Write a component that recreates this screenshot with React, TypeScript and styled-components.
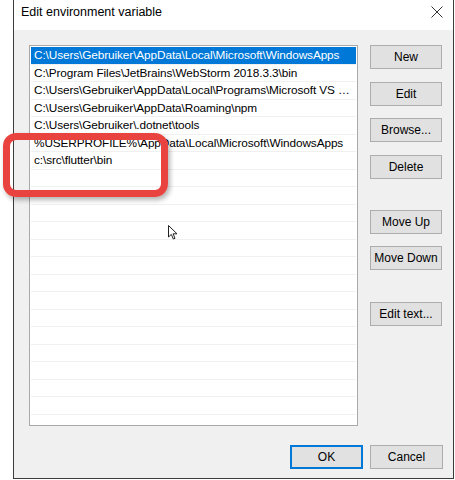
import React from "react"
import styled, { createGlobalStyle } from "styled-components"

const GlobalStyle = createGlobalStyle`
    body {
        margin: 0;
        background: #ffffff;
        font-family: "Liberation Sans", Arial, sans-serif;
    }
`

const paths = [
    "C:\\Users\\Gebruiker\\AppData\\Local\\Microsoft\\WindowsApps",
    "C:\\Program Files\\JetBrains\\WebStorm 2018.3.3\\bin",
    "C:\\Users\\Gebruiker\\AppData\\Local\\Programs\\Microsoft VS Cod...",
    "C:\\Users\\Gebruiker\\AppData\\Roaming\\npm",
    "C:\\Users\\Gebruiker\\.dotnet\\tools",
    "%USERPROFILE%\\AppData\\Local\\Microsoft\\WindowsApps",
    "c:\\src\\flutter\\bin",
]
const TOTAL_ROWS = 22

const sideButtons = [
    { label: "New", gapBefore: 0 },
    { label: "Edit", gapBefore: 0 },
    { label: "Browse...", gapBefore: 0 },
    { label: "Delete", gapBefore: 0 },
    { label: "Move Up", gapBefore: 18 },
    { label: "Move Down", gapBefore: 0 },
    { label: "Edit text...", gapBefore: 19 },
]

export default function App() {
    const rows = Array.from({ length: TOTAL_ROWS }, (_, i) => paths[i] ?? "")
    return (
        <>
            <GlobalStyle />
            <Page>
                <Window>
                    <TitleBar>
                        <Title>Edit environment variable</Title>
                        <CloseIcon />
                    </TitleBar>
                    <Body>
                        <Main>
                            <ListBox>
                                {rows.map((text, i) => (
                                    <Row key={i} $selected={i === 0}>{text}</Row>
                                ))}
                            </ListBox>
                            <ButtonColumn>
                                {sideButtons.map(b => (
                                    <SideButton key={b.label} $gapBefore={b.gapBefore}>{b.label}</SideButton>
                                ))}
                            </ButtonColumn>
                        </Main>
                        <Footer>
                            <DialogButton $primary>OK</DialogButton>
                            <DialogButton>Cancel</DialogButton>
                        </Footer>
                    </Body>
                </Window>
                <Highlight />
                <Cursor />
            </Page>
        </>
    )
}

const CloseIcon = () => (
    <svg width="12" height="12" viewBox="0 0 12 12">
        <path d="M0.5 0.5 L11.5 11.5 M11.5 0.5 L0.5 11.5" stroke="#333" strokeWidth="1" fill="none" />
    </svg>
)

const Cursor = () => (
    <CursorWrap width="11" height="15" viewBox="0 0 11 15">
        <path d="M0.5 0.5 L0.5 12 L3.3 9.4 L5.3 14 L7 13.3 L5.1 8.8 L9 8.8 Z" fill="#fff" stroke="#222" strokeWidth="1" strokeLinejoin="round" />
    </CursorWrap>
)

const Page = styled.div`
    position: relative;
    width: 455px;
    height: 480px;
    padding-left: 13px;
    box-sizing: border-box;
    overflow: hidden;
`

const Window = styled.div`
    display: flex;
    flex-direction: column;
    height: 479px;
    width: 441px;
    border: 1px solid #3c3c3c;
    border-top: none;
    box-sizing: border-box;
`

const TitleBar = styled.div`
    display: flex;
    align-items: center;
    justify-content: space-between;
    height: 30px;
    padding: 0 10px 6px 7px;
    background: #ffffff;
    box-sizing: border-box;
`

const Title = styled.span`
    font-size: 12.5px;
    color: #000;
`

const Body = styled.div`
    flex: 1;
    display: flex;
    flex-direction: column;
    background: #f0f0f0;
    padding: 15px 10px 9px 15px;
`

const Main = styled.div`
    display: flex;
    gap: 12px;
`

const ListBox = styled.div`
    width: 329px;
    height: 381px;
    background: #fff;
    border: 1px solid #a9a9a9;
    box-sizing: border-box;
    padding: 1px;
    overflow: hidden;
`

const Row = styled.div<{ $selected?: boolean }>`
    height: 17.5px;
    line-height: 16.5px;
    padding: 0 2px 0 3px;
    font-size: 11.8px;
    letter-spacing: -0.1px;
    white-space: nowrap;
    overflow: hidden;
    text-overflow: ellipsis;
    box-sizing: border-box;
    border-bottom: 1px solid #f0f0f0;
    background: ${p => (p.$selected ? "#0078d7" : "transparent")};
    color: ${p => (p.$selected ? "#fff" : "#000")};
`

const ButtonColumn = styled.div`
    display: flex;
    flex-direction: column;
    gap: 12.7px;
`

const ButtonBase = styled.button`
    height: 24px;
    width: 72px;
    font-family: "Liberation Sans", Arial, sans-serif;
    font-size: 12px;
    color: #000;
    background: #e1e1e1;
    border: 1px solid #adadad;
    padding: 0;
    box-sizing: border-box;
`

const SideButton = styled(ButtonBase)<{ $gapBefore: number }>`
    margin-top: ${p => p.$gapBefore}px;
`

const Footer = styled.div`
    display: flex;
    justify-content: flex-end;
    gap: 7px;
    margin-top: auto;
`

const DialogButton = styled(ButtonBase)<{ $primary?: boolean }>`
    width: 73px;
    height: 24px;
    border-color: ${p => (p.$primary ? "#0078d7" : "#adadad")};
    box-shadow: ${p => (p.$primary ? "inset 0 0 0 1px #0078d7" : "none")};
`

const Highlight = styled.div`
    position: absolute;
    left: 3px;
    top: 133px;
    width: 165px;
    height: 64px;
    border: 7px solid #e9433f;
    border-radius: 13px;
    box-sizing: border-box;
    box-shadow: 2px 3px 5px rgba(0, 0, 0, 0.3);
`

const CursorWrap = styled.svg`
    position: absolute;
    left: 168px;
    top: 225px;
`
